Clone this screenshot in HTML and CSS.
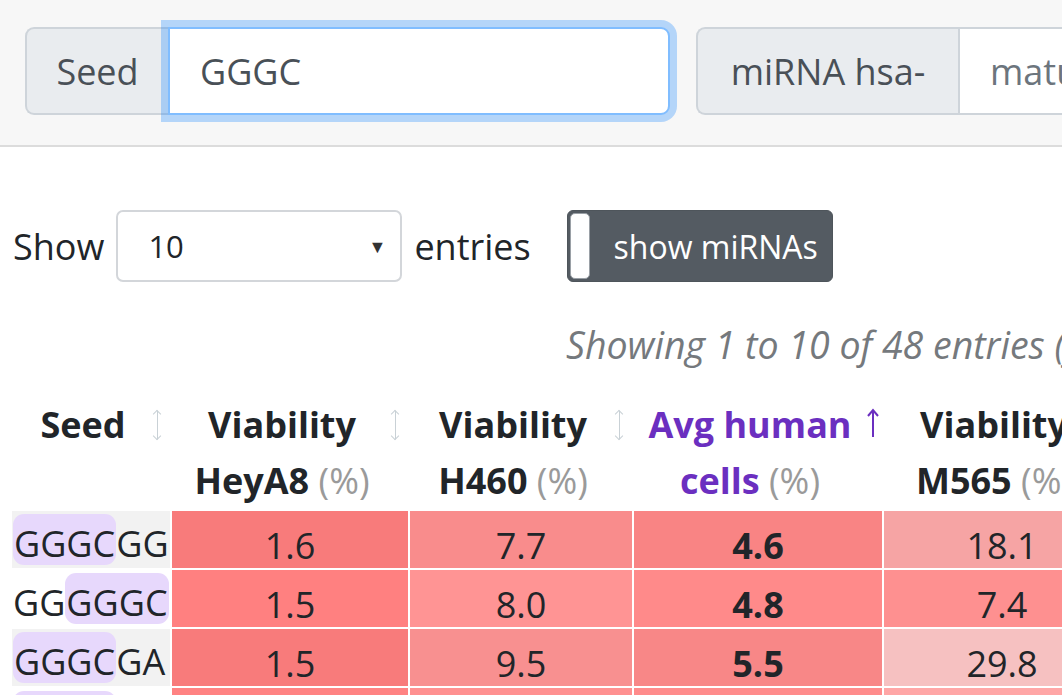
FILE: index.html
```html
<!DOCTYPE html>
<html lang="en">
<head>
    <meta charset="UTF-8">
    <meta name="viewport" content="width=device-width, initial-scale=1.0">
    <title>miRNA seed toxicity</title>
    <link rel="stylesheet" href="styles.css">
</head>
<body>

    <div class="topbar">
        <div class="input-group seed-group">
            <span class="addon">Seed</span>
            <input class="field focused" type="text" value="GGGC">
        </div>
        <div class="input-group mirna-group">
            <span class="addon">miRNA hsa-</span>
            <input class="field" type="text" placeholder="mature miRNA name">
        </div>
    </div>

    <div class="content">
        <div class="controls">
            <label class="length">Show
                <span class="select">10<span class="caret">&#9660;</span></span>
                entries
            </label>
            <div class="toggle">
                <span class="handle"></span>
                <span class="toggle-label">show miRNAs</span>
            </div>
        </div>

        <div class="info">Showing 1 to 10 of 48 entries (filtered from 4096 total entries)</div>

        <table class="seeds">
            <colgroup>
                <col class="c-seed">
                <col class="c-hey">
                <col class="c-h460">
                <col class="c-avg">
                <col class="c-m565">
                <col class="c-more">
            </colgroup>
            <thead>
                <tr>
                    <th>Seed<span class="sort"></span></th>
                    <th>Viability HeyA8 <span class="unit">(%)</span><span class="sort"></span></th>
                    <th>Viability H460 <span class="unit">(%)</span><span class="sort"></span></th>
                    <th class="active">Avg human cells <span class="unit">(%)</span>
                        <svg class="sort-up" viewBox="0 0 14 30" width="14" height="30">
                            <path d="M7 2 V29 M2 8 L7 2 L12 8" fill="none" stroke="#6b2fc0" stroke-width="2"/>
                        </svg>
                    </th>
                    <th>Viability M565 <span class="unit">(%)</span><span class="sort"></span></th>
                    <th>Viability 3LL <span class="unit">(%)</span><span class="sort"></span></th>
                </tr>
            </thead>
            <tbody>
                <tr class="odd">
                    <td class="seed"><span class="hit">GGGC</span>GG</td>
                    <td style="background:#f87b7b">1.6</td>
                    <td style="background:#f98c8c">7.7</td>
                    <td class="avg" style="background:#f98484">4.6</td>
                    <td style="background:#f6a4a4">18.1</td>
                    <td style="background:#f7a8a8">20.3</td>
                </tr>
                <tr>
                    <td class="seed">GG<span class="hit">GGGC</span></td>
                    <td style="background:#ff8080">1.5</td>
                    <td style="background:#ff9494">8.0</td>
                    <td class="avg" style="background:#ff8a8a">4.8</td>
                    <td style="background:#fe9090">7.4</td>
                    <td style="background:#ff9a9a">12.2</td>
                </tr>
                <tr class="odd">
                    <td class="seed"><span class="hit">GGGC</span>GA</td>
                    <td style="background:#f87b7b">1.5</td>
                    <td style="background:#f89090">9.5</td>
                    <td class="avg" style="background:#f88787">5.5</td>
                    <td style="background:#f6c1c1">29.8</td>
                    <td style="background:#f7a0a0">15.0</td>
                </tr>
                <tr>
                    <td class="seed"><span class="hit">GGGC</span>AG</td>
                    <td style="background:#ff8282">2.1</td>
                    <td style="background:#ff9090">8.4</td>
                    <td class="avg" style="background:#ff8b8b">5.9</td>
                    <td style="background:#ffa6a6">16.2</td>
                    <td style="background:#ff9c9c">11.7</td>
                </tr>
            </tbody>
        </table>
    </div>

</body>
</html>
```

FILE: styles.css
```css
body {
    margin: 0;
    padding: 0;
    font-family: 'Open Sans', 'Noto Sans', sans-serif;
    color: #212529;
    background: #fff;
    overflow: hidden;
}

/* Barra de busca no topo */
.topbar {
    display: flex;
    gap: 26px;
    padding: 27px 0 30px 25px;
    background: #f7f7f7;
    border-bottom: 2px solid #dcdcdc;
    overflow: hidden;
}

.input-group {
    display: flex;
    flex-shrink: 0;
    height: 88px;
}

.seed-group { width: 645px; }
.mirna-group { width: 600px; }

.addon {
    display: flex;
    align-items: center;
    justify-content: center;
    box-sizing: border-box;
    padding: 0 20px;
    background: #e9ecef;
    border: 2px solid #ced4da;
    border-right: none;
    border-radius: 9px 0 0 9px;
    color: #495057;
    font-size: 36px;
    white-space: nowrap;
}

.seed-group .addon { width: 143px; }
.mirna-group .addon { width: 262px; }

.field {
    flex: 1;
    min-width: 0;
    box-sizing: border-box;
    margin: 0;
    padding: 0 30px;
    border: 2px solid #ced4da;
    border-radius: 0 9px 9px 0;
    background: #fff;
    color: #495057;
    font-family: inherit;
    font-size: 36px;
    outline: none;
}

.field::placeholder { color: #6c757d; }

/* Campo em foco com brilho azul */
.field.focused {
    position: relative;
    z-index: 1;
    border-color: #80bdff;
    box-shadow: 0 0 0 7px rgba(0, 123, 255, 0.27);
}

.content {
    padding: 0 0 0 10px;
}

/* Linha "Show 10 entries" */
.controls {
    display: flex;
    align-items: center;
    gap: 36px;
    margin-top: 63px;
    padding-left: 3px;
}

.length {
    display: flex;
    align-items: center;
    gap: 12px;
    font-size: 36px;
}

.select {
    display: flex;
    align-items: center;
    justify-content: space-between;
    box-sizing: border-box;
    width: 286px;
    height: 72px;
    padding: 0 14px 0 30px;
    border: 2px solid #d3d6da;
    border-radius: 7px;
    font-size: 31px;
    color: #212529;
}

.caret {
    font-size: 18px;
    color: #333;
}

.toggle {
    display: flex;
    align-items: center;
    box-sizing: border-box;
    width: 266px;
    height: 72px;
    padding: 2px;
    background: #545b62;
    border: 1px solid #4e555b;
    border-radius: 6px;
}

.handle {
    width: 20px;
    height: 100%;
    background: #fff;
    border-radius: 5px;
    border: 1px solid #9aa0a6;
    box-sizing: border-box;
}

.toggle-label {
    flex: 1;
    text-align: center;
    color: #fff;
    font-size: 32px;
    padding-left: 12px;
    white-space: nowrap;
}

/* Texto de informação */
.info {
    margin-top: 38px;
    padding-left: 556px;
    white-space: nowrap;
    font-style: italic;
    font-size: 37.5px;
    line-height: 50px;
    color: #75797d;
}

/* Tabela de seeds */
.seeds {
    margin-top: 25px;
    border-collapse: separate;
    border-spacing: 2px;
    table-layout: fixed;
    width: 1354px;
}

.c-seed { width: 158px; }
.c-hey { width: 236px; }
.c-h460 { width: 222px; }
.c-avg { width: 248px; }
.c-m565 { width: 236px; }
.c-more { width: 240px; }

.seeds th {
    position: relative;
    padding: 0 28px 0 12px;
    font-size: 36px;
    font-weight: 700;
    line-height: 56px;
    text-align: center;
    vertical-align: bottom;
}

.seeds th:first-child {
    vertical-align: top;
}

.seeds th .unit {
    font-weight: 400;
    color: #9a9a9a;
}

.seeds th.active {
    color: #6b2fc0;
}

.sort {
    position: absolute;
    top: 12px;
    right: 8px;
    width: 10px;
    height: 32px;
    background:
        linear-gradient(#c9d1d6, #c9d1d6) center / 1px 28px no-repeat;
}

.sort::before,
.sort::after {
    content: "";
    position: absolute;
    left: 2px;
    width: 5px;
    height: 5px;
    border-left: 1px solid #c9d1d6;
    border-top: 1px solid #c9d1d6;
}

.sort::before {
    top: 2px;
    transform: rotate(45deg);
}

.sort::after {
    bottom: 2px;
    transform: rotate(-135deg);
}

.sort-up {
    position: absolute;
    top: 11px;
    right: 2px;
}

.seeds td {
    height: 45px;
    padding: 12px 0 0;
    font-size: 36px;
    line-height: 45px;
    text-align: center;
    vertical-align: middle;
}

.seeds td.avg {
    font-weight: 700;
}

.seeds td.seed {
    height: 57px;
    padding: 0 0 0 1px;
    text-align: left;
    white-space: nowrap;
    background: #fff;
}

.seeds tr.odd td.seed {
    background: #f2f2f2;
}

.hit {
    display: inline-block;
    padding: 8px 1px 0;
    line-height: 43px;
    background: #e7d8fc;
    border-radius: 11px;
}
```
